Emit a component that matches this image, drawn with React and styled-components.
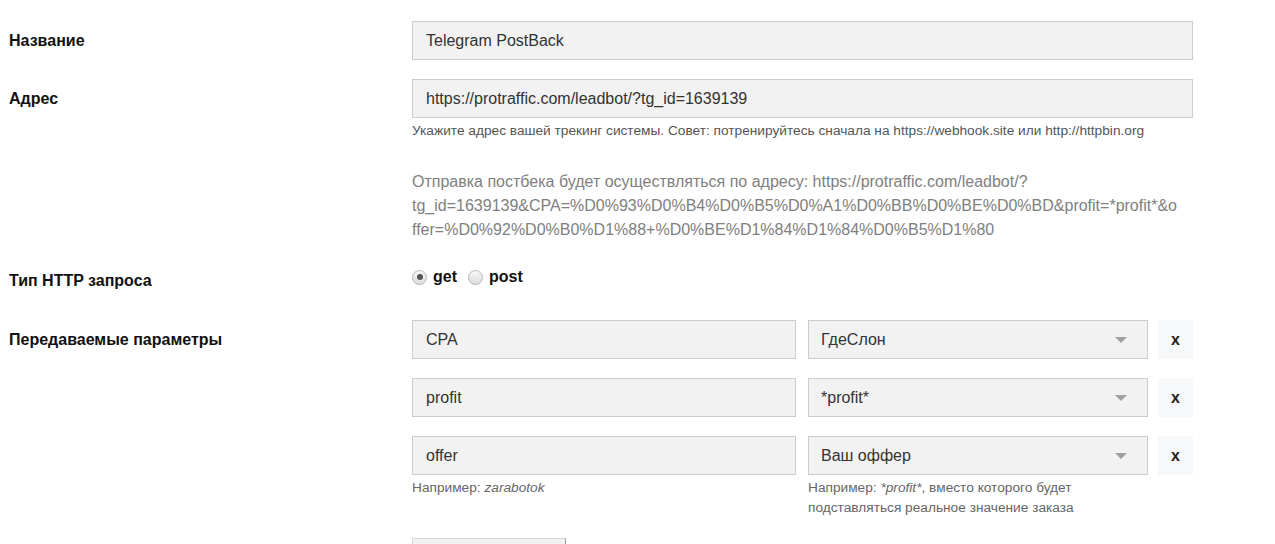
import styled, { createGlobalStyle } from "styled-components";

const GlobalStyle = createGlobalStyle`
  body {
    margin: 0;
    background: #fff;
    font-family: "Liberation Sans", Arial, sans-serif;
    color: #222;
  }
`;

const Page = styled.div`
  padding: 21px 0 0 9px;
  height: 544px;
  overflow: hidden;
  box-sizing: border-box;
`;

const Row = styled.div`
  display: grid;
  grid-template-columns: 403px 781px;
  margin-bottom: ${(p) => p.$gap || 19}px;
`;

const Label = styled.div`
  font-size: 16px;
  font-weight: bold;
  color: #111;
  line-height: ${(p) => p.$lh || 39}px;
  padding-top: ${(p) => p.$pt || 0}px;
`;

const Field = styled.div`
  display: flex;
  flex-direction: column;
`;

const Input = styled.input`
  box-sizing: border-box;
  height: 39px;
  width: 100%;
  border: 1px solid #cccccc;
  background: #f2f2f2;
  padding: 0 13px;
  font-family: inherit;
  font-size: 16px;
  color: #333;
  outline: none;
`;

const Help = styled.div`
  font-size: 13.7px;
  line-height: 16px;
  color: #555;
  margin-top: 5px;
`;

const Preview = styled.div`
  margin-top: 31px;
  max-width: 765px;
  font-size: 16px;
  line-height: 24px;
  color: #808080;
  overflow-wrap: break-word;
`;

const RadioGroup = styled.div`
  display: flex;
  align-items: center;
  height: 18px;
  gap: 6px;
`;

const RadioLabel = styled.label`
  display: flex;
  align-items: center;
  gap: 6px;
  font-size: 16px;
  font-weight: bold;
  color: #111;
  margin-right: 5px;
`;

const Radio = styled.input`
  appearance: none;
  margin: 0;
  width: 15px;
  height: 15px;
  border-radius: 50%;
  border: 1px solid #b5b5b5;
  background: linear-gradient(#f8f8f8, #dcdcdc);
  box-sizing: border-box;
  position: relative;
  &:checked::after {
    content: "";
    position: absolute;
    left: 3.5px;
    top: 3.5px;
    width: 6px;
    height: 6px;
    border-radius: 50%;
    background: #555;
  }
`;

const ParamRow = styled.div`
  display: flex;
  align-items: flex-start;
  margin-bottom: ${(p) => p.$gap ?? 19}px;
`;

const ParamCol = styled.div`
  display: flex;
  flex-direction: column;
  width: ${(p) => p.$width}px;
  margin-right: ${(p) => p.$mr || 0}px;
`;

const SelectBox = styled.div`
  box-sizing: border-box;
  height: 39px;
  border: 1px solid #cccccc;
  background: #f2f2f2;
  padding: 0 20px 0 12px;
  display: flex;
  align-items: center;
  justify-content: space-between;
  font-size: 16px;
  color: #333;
`;

const Arrow = styled.span`
  width: 0;
  height: 0;
  border-left: 6px solid transparent;
  border-right: 6px solid transparent;
  border-top: 6px solid #a0a0a0;
`;

const RemoveButton = styled.button`
  width: 35px;
  height: 39px;
  border: none;
  background: #f7f8f9;
  font-family: inherit;
  font-size: 16px;
  font-weight: bold;
  color: #222;
  padding: 0;
  cursor: pointer;
`;

const ParamHelp = styled.div`
  font-size: 13.7px;
  line-height: 20px;
  color: #666;
  margin-top: 3px;
  max-width: ${(p) => (p.$max ? p.$max + "px" : "none")};
`;

const AddButton = styled.button`
  margin-top: 20px;
  width: 154px;
  height: 38px;
  border: 1px solid #d6d6d6;
  border-right-color: #999;
  background: #f2f2f2;
  font-family: inherit;
  font-size: 15px;
  color: #333;
`;

const params = [
  { name: "CPA", value: "ГдеСлон" },
  { name: "profit", value: "*profit*" },
  { name: "offer", value: "Ваш оффер" },
];

export default function App() {
  return (
    <Page>
      <GlobalStyle />
      <Row>
        <Label>Название</Label>
        <Field>
          <Input defaultValue="Telegram PostBack" />
        </Field>
      </Row>
      <Row $gap={26}>
        <Label>Адрес</Label>
        <Field>
          <Input defaultValue="https://protraffic.com/leadbot/?tg_id=1639139" />
          <Help>
            Укажите адрес вашей трекинг системы. Совет: потренируйтесь сначала на https://webhook.site или http://httpbin.org
          </Help>
          <Preview>
            Отправка постбека будет осуществляться по адресу: https://protraffic.com/leadbot/?tg_id=1639139&amp;CPA=%D0%93%D0%B4%D0%B5%D0%A1%D0%BB%D0%BE%D0%BD&amp;profit=*profit*&amp;offer=%D0%92%D0%B0%D1%88+%D0%BE%D1%84%D1%84%D0%B5%D1%80
          </Preview>
        </Field>
      </Row>
      <Row $gap={30}>
        <Label $lh={18} $pt={4}>Тип HTTP запроса</Label>
        <RadioGroup>
          <RadioLabel>
            <Radio type="radio" name="method" defaultChecked />
            get
          </RadioLabel>
          <RadioLabel>
            <Radio type="radio" name="method" />
            post
          </RadioLabel>
        </RadioGroup>
      </Row>
      <Row>
        <Label>Передаваемые параметры</Label>
        <Field>
          {params.map((p, i) => {
            const last = i === params.length - 1;
            return (
              <ParamRow key={p.name} $gap={last ? 0 : 19}>
                <ParamCol $width={384} $mr={12}>
                  <Input defaultValue={p.name} />
                  {last && (
                    <ParamHelp>
                      Например: <i>zarabotok</i>
                    </ParamHelp>
                  )}
                </ParamCol>
                <ParamCol $width={340} $mr={10}>
                  <SelectBox>
                    {p.value}
                    <Arrow />
                  </SelectBox>
                  {last && (
                    <ParamHelp $max={300}>
                      Например: <i>*profit*</i>, вместо которого будет подставляться реальное значение заказа
                    </ParamHelp>
                  )}
                </ParamCol>
                <RemoveButton>x</RemoveButton>
              </ParamRow>
            );
          })}
          <div>
            <AddButton>Добавить</AddButton>
          </div>
        </Field>
      </Row>
    </Page>
  );
}
